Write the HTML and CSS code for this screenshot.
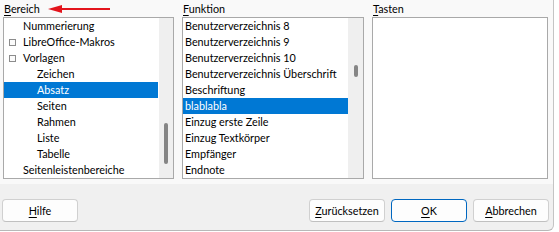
FILE: index.html
```html
<!DOCTYPE html>
<html lang="de">
<head>
<meta charset="utf-8">
<title>Tastatur</title>
<link rel="stylesheet" href="styles.css">
</head>
<body>
<div class="dialog">
  <div class="top">
    <div class="col col-bereich">
      <div class="label"><u>B</u>ereich</div>
      <div class="listbox">
        <ul class="items">
          <li class="lvl0">Nummerierung</li>
          <li class="lvl0 exp"><span class="box"></span>LibreOffice-Makros</li>
          <li class="lvl0 exp"><span class="box"></span>Vorlagen</li>
          <li class="lvl1">Zeichen</li>
          <li class="lvl1 sel">Absatz</li>
          <li class="lvl1">Seiten</li>
          <li class="lvl1">Rahmen</li>
          <li class="lvl1">Liste</li>
          <li class="lvl1">Tabelle</li>
          <li class="lvl0">Seitenleistenbereiche</li>
        </ul>
        <div class="track track-left"><div class="thumb" style="margin-top:105px;height:41px"></div></div>
      </div>
      <svg class="arrow" width="62" height="10" viewBox="0 0 62 10" aria-hidden="true">
        <line x1="12" y1="5" x2="62" y2="5" stroke="#e3141c" stroke-width="1.8"/>
        <polygon points="0,5 14,1 14,9" fill="#e3141c"/>
      </svg>
    </div>
    <div class="col col-funktion">
      <div class="label"><u>F</u>unktion</div>
      <div class="listbox">
        <ul class="items">
          <li>Benutzerverzeichnis 8</li>
          <li>Benutzerverzeichnis 9</li>
          <li>Benutzerverzeichnis 10</li>
          <li>Benutzerverzeichnis Überschrift</li>
          <li>Beschriftung</li>
          <li class="sel">blablabla</li>
          <li>Einzug erste Zeile</li>
          <li>Einzug Textkörper</li>
          <li>Empfänger</li>
          <li>Endnote</li>
        </ul>
        <div class="track track-right"><div class="thumb" style="margin-top:47px;height:12px"></div></div>
      </div>
    </div>
    <div class="col col-tasten">
      <div class="label"><u>T</u>asten</div>
      <div class="listbox empty"></div>
    </div>
  </div>
  <div class="bottom">
    <button class="btn"><u>H</u>ilfe</button>
    <div class="spacer"></div>
    <button class="btn"><u>Z</u>urücksetzen</button>
    <button class="btn ok"><u>O</u>K</button>
    <button class="btn"><u>A</u>bbrechen</button>
  </div>
</div>
</body>
</html>
```
FILE: styles.css
```css
html, body {
  margin: 0;
  padding: 0;
  background: #ffffff;
}
body {
  width: 559px;
  height: 232px;
  overflow: hidden;
  font-family: Lato, "Open Sans", sans-serif;
  font-size: 10.8px;
  color: #000000;
}
.dialog {
  width: 553px;
  height: 230px;
  border-right: 1px solid #c4c4c4;
  border-bottom: 1px solid #b8b8b8;
  border-bottom-right-radius: 6px;
  overflow: hidden;
  display: flex;
  flex-direction: column;
  background: #f0f0f0;
}
.top {
  background: #f9f9f9;
  height: 182px;
  padding: 2px 0 0 3px;
  display: flex;
  gap: 8px;
}
.col {
  position: relative;
  display: flex;
  flex-direction: column;
}
.col-bereich { width: 171px; }
.col-funktion { width: 182px; }
.col-tasten { width: 176px; }
.label {
  height: 15px;
  line-height: 13px;
  padding-left: 1px;
}
.label u, .btn u {
  text-decoration-thickness: 1px;
  text-underline-offset: 2px;
}
.listbox {
  height: 160px;
  border: 1px solid #a9a9a9;
  background: #ffffff;
  display: flex;
}
.items {
  list-style: none;
  margin: 0;
  padding: 0;
  flex: 1;
  min-width: 0;
}
.items li {
  height: 16px;
  line-height: 16px;
  white-space: nowrap;
  padding-left: 2px;
  display: flex;
  align-items: center;
}
.col-bereich .items li { padding-left: 19px; }
.col-bereich .items li.lvl1 { padding-left: 33px; }
.col-bereich .items li.exp { padding-left: 5px; }
.box {
  width: 5px;
  height: 5px;
  border: 1px solid #8c8c8c;
  background: #fbfbfb;
  margin-right: 7px;
  flex: none;
}
.items li.sel {
  background: #0078d4;
  color: #ffffff;
}
.col-bereich .items li.sel { margin-right: 1px; }
.track {
  background: #efefef;
  display: flex;
  flex-direction: column;
  align-items: center;
}
.track-left { width: 14px; }
.track-right { width: 15px; }
.thumb {
  width: 4px;
  background: #858585;
  border-radius: 2px;
}
.arrow {
  position: absolute;
  left: 45px;
  top: 2px;
}
.bottom {
  flex: 1;
  display: flex;
  align-items: flex-start;
  padding: 15px 0 0 2px;
  gap: 6px;
}
.spacer { flex: 1; }
.btn {
  width: 76px;
  height: 23px;
  border: 1px solid #d0d0d0;
  border-bottom-color: #c0c0c0;
  border-radius: 4px;
  background: #fdfdfd;
  font-family: inherit;
  font-size: 10.8px;
  color: #000000;
  padding: 0;
}
.btn.ok {
  border-color: #0067c0;
  background: #fdfdfd;
}
.btn:last-child { margin-right: 4px; }
```
